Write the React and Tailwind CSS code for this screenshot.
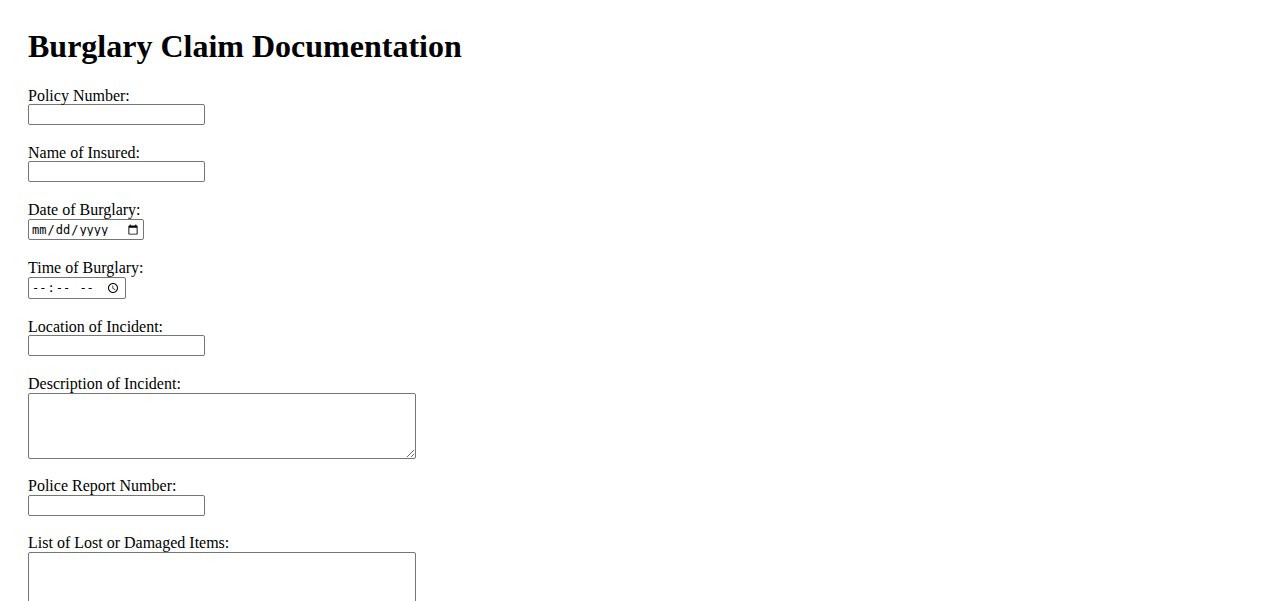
import React from 'react';

const inputBase =
  'block border border-[#767676] rounded-[2px] bg-white px-[2px] outline-none';

const Field = ({ label, children, after = 19, labelH = 17 }) => (
  <div style={{ marginBottom: after }}>
    <label className="block text-[16px]" style={{ height: labelH, lineHeight: `${labelH}px` }}>
      {label}
    </label>
    {children}
  </div>
);

const App = () => {
  return (
    <div className="min-h-screen bg-white text-black font-['Liberation_Serif','Times_New_Roman',serif] px-[28px] pt-[28px]">
      {/* Heading */}
      <h1 className="text-[32px] font-bold leading-[37px] mb-[22px]">Burglary Claim Documentation</h1>

      <form>
        <Field label="Policy Number:">
          <input type="text" className={`${inputBase} w-[177px] h-[21px]`} />
        </Field>

        <Field label="Name of Insured:">
          <input type="text" className={`${inputBase} w-[177px] h-[21px]`} />
        </Field>

        <Field label="Date of Burglary:" labelH={18}>
          <input
            type="date"
            className={`${inputBase} w-[116px] h-[21px] text-[12px] leading-none font-['DejaVu_Sans_Mono','Liberation_Mono',monospace]`}
          />
        </Field>

        <Field label="Time of Burglary:" labelH={18}>
          <input
            type="time"
            className={`${inputBase} w-[98px] h-[22px] text-[12px] leading-none font-['DejaVu_Sans_Mono','Liberation_Mono',monospace]`}
          />
        </Field>

        <Field label="Location of Incident:">
          <input type="text" className={`${inputBase} w-[177px] h-[21px]`} />
        </Field>

        <Field label="Description of Incident:" after={18} labelH={18}>
          <textarea className={`${inputBase} w-[388px] h-[66px]`} />
        </Field>

        <Field label="Police Report Number:" after={18} labelH={18}>
          <input type="text" className={`${inputBase} w-[177px] h-[21px]`} />
        </Field>

        <Field label="List of Lost or Damaged Items:" labelH={18}>
          <textarea className={`${inputBase} w-[388px] h-[66px]`} />
        </Field>
      </form>
    </div>
  );
};

export default App;
